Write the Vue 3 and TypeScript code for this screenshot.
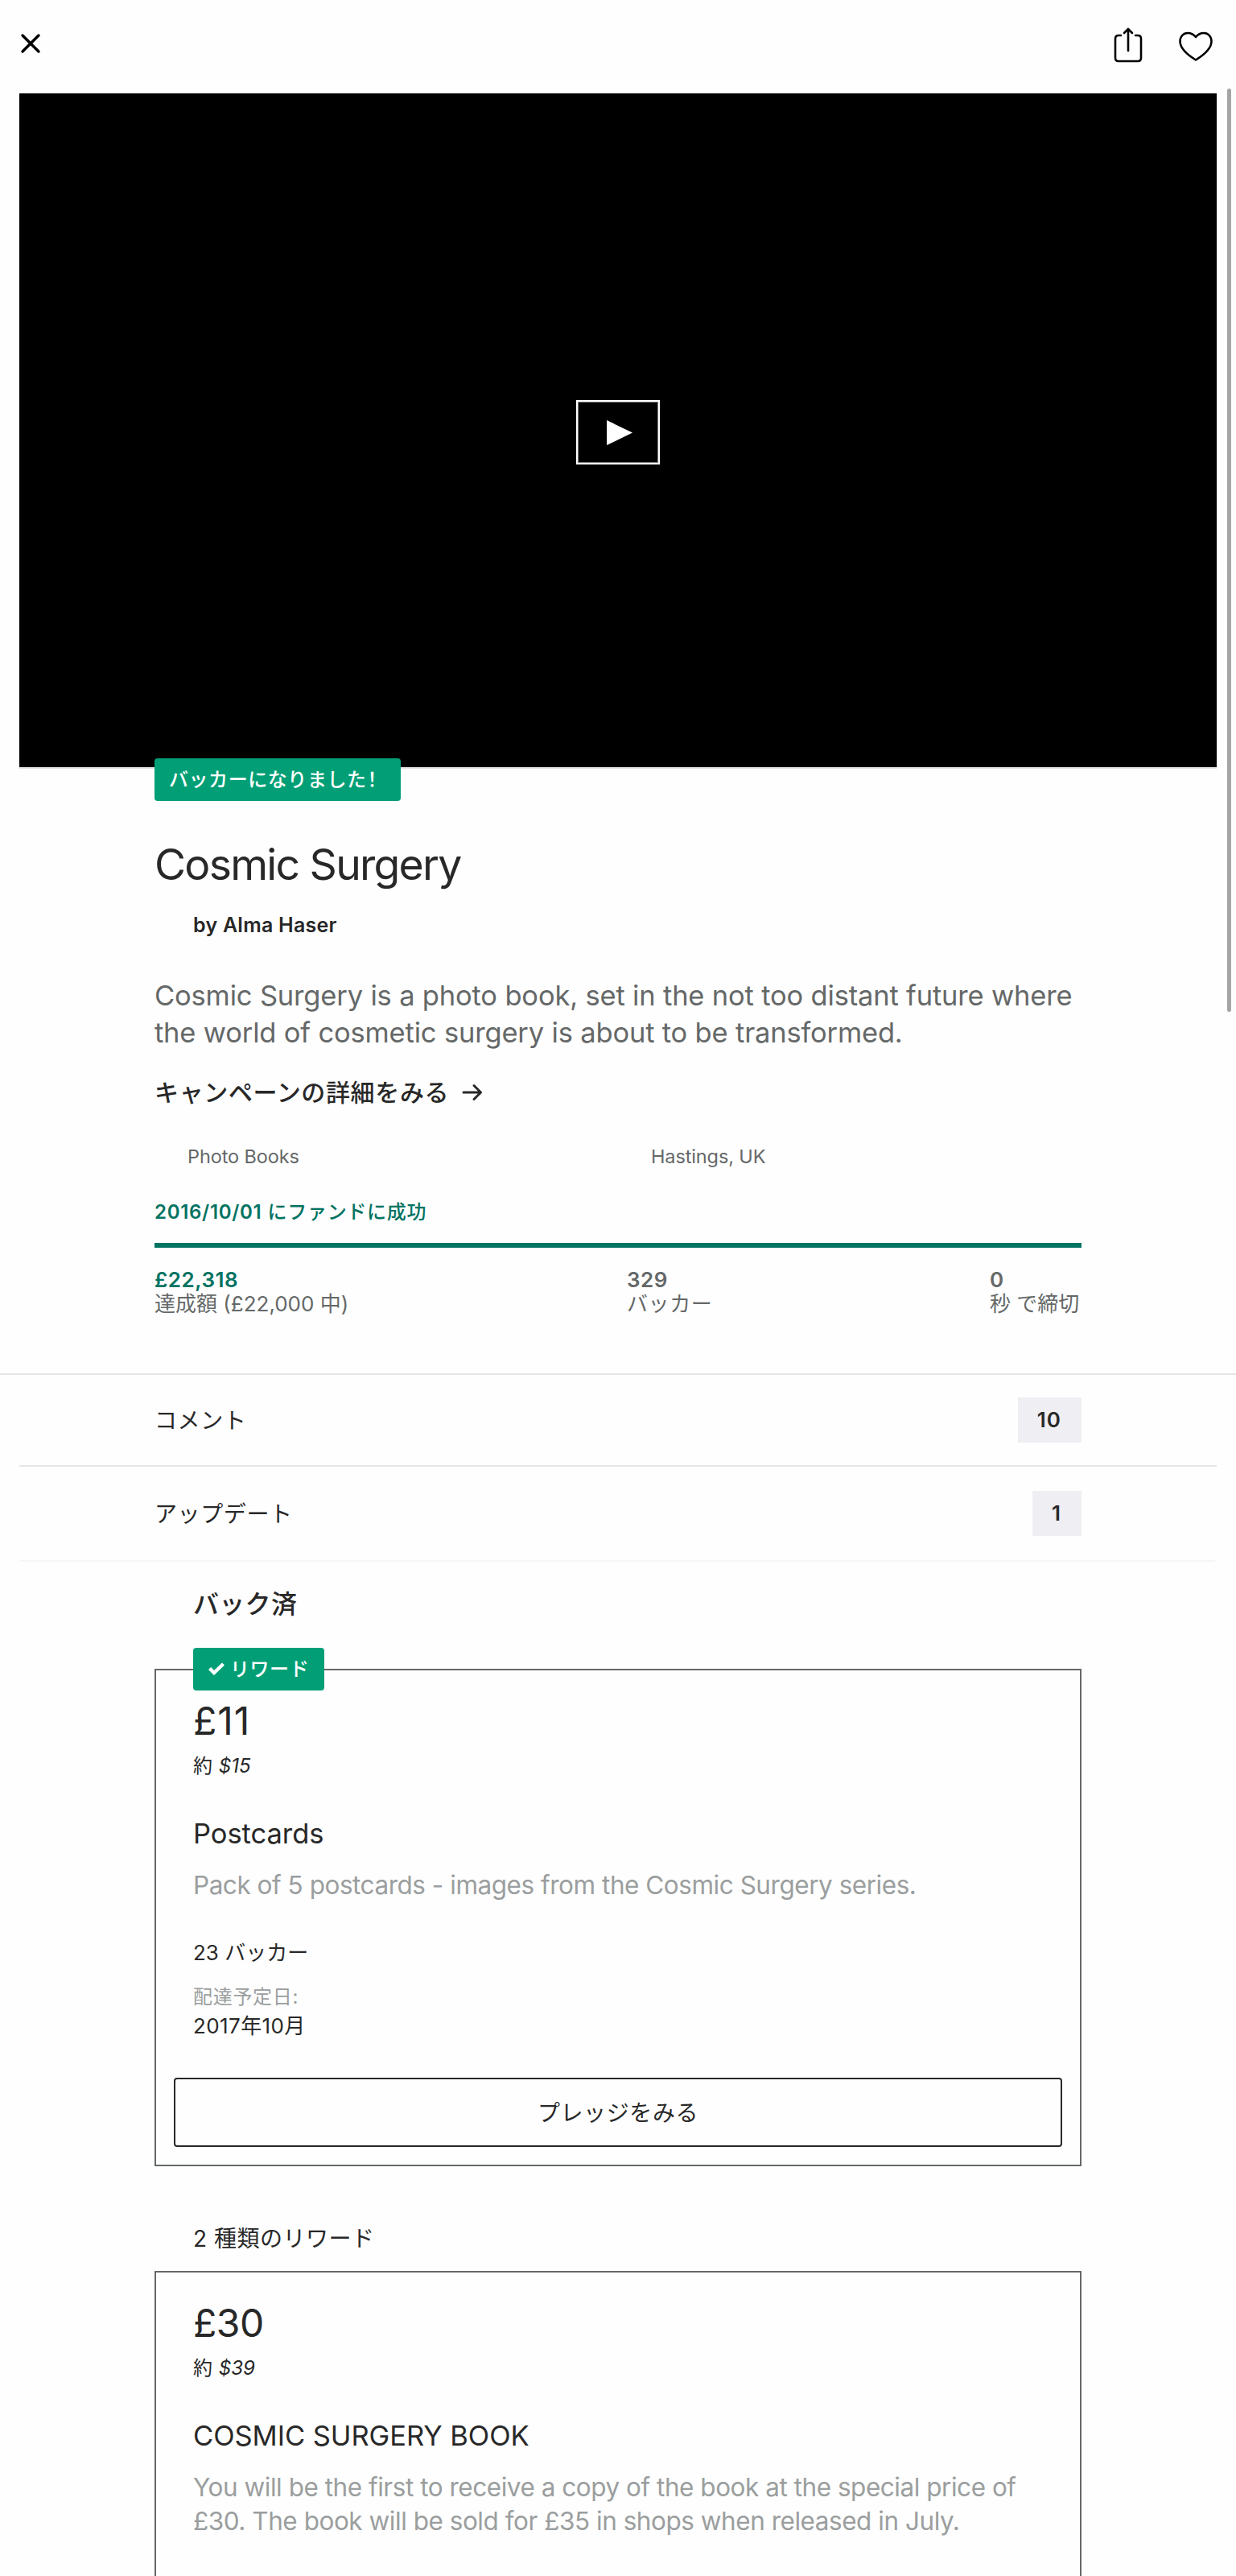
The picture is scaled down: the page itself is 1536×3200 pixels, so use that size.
<script setup lang="ts">
interface Reward {
  price: string
  converted: string
  title: string
  description: string[]
  backers?: string
  delivery?: string
  pledged?: boolean
}

const badge = { text: 'バッカーになりました', mark: '！' }

const blurb = [
  'Cosmic Surgery is a photo book, set in the not too distant future where',
  'the world of cosmetic surgery is about to be transformed.',
]

const links = [
  { label: 'コメント', count: 10 },
  { label: 'アップデート', count: 1 },
]

const pledged: Reward = {
  price: '£11',
  converted: '$15',
  title: 'Postcards',
  description: ['Pack of 5 postcards - images from the Cosmic Surgery series.'],
  backers: '23 バッカー',
  delivery: '2017年10月',
  pledged: true,
}

const available: Reward = {
  price: '£30',
  converted: '$39',
  title: 'COSMIC SURGERY BOOK',
  description: [
    'You will be the first to receive a copy of the book at the special price of',
    '£30. The book will be sold for £35 in shops when released in July.',
  ],
}

const sections = [
  { heading: 'バック済', strong: true, reward: pledged },
  { heading: '2 種類のリワード', strong: false, reward: available },
]
</script>

<template>
  <div class="page">
    <header class="toolbar">
      <svg class="close" width="26" height="26" viewBox="0 0 26 26" aria-label="Close">
        <path d="M3 3 L23 23 M23 3 L3 23" />
      </svg>
      <div class="actions">
        <svg width="36" height="44" viewBox="0 0 36 44" aria-label="Share">
          <path d="M9 10 H6 Q2 10 2 14 V38 Q2 42 6 42 H30 Q34 42 34 38 V14 Q34 10 30 10 H27" />
          <path d="M18 29 V3 M13 7 L18 2 L23 7" />
        </svg>
        <svg width="42" height="38" viewBox="0 0 42 38" aria-label="Save">
          <path d="M21 7 C18 3.5 14.500 2 11 2 C5.500 2 1.500 6.500 1.500 12.500 C1.500 21 9 28 21 35.500 C33 28 40.500 21 40.500 12.500 C40.500 6.500 36.500 2 31 2 C27.500 2 24 3.500 21 7 Z" />
        </svg>
      </div>
    </header>

    <section class="video">
      <div class="play">
        <svg width="32" height="31" viewBox="0 0 32 31"><path d="M0 0 L32 15.500 L0 31 Z" /></svg>
      </div>
      <div class="scrollbar"></div>
      <div class="tag backer">{{ badge.text }}<span class="mark">{{ badge.mark }}</span></div>
    </section>

    <section class="summary">
      <h1>Cosmic Surgery</h1>
      <p class="author">by Alma Haser</p>
      <p class="blurb"><span v-for="line in blurb" :key="line">{{ line }}</span></p>
      <p class="campaign">
        <span>キャンペーンの詳細をみる</span>
        <svg width="26" height="22" viewBox="0 0 26 22">
          <path d="M2 11 H23 M15 2.500 L23.500 11 L15 19.500" />
        </svg>
      </p>
      <div class="meta">
        <span>Photo Books</span>
        <span>Hastings, UK</span>
      </div>
      <p class="funded"><span class="date">2016/10/01</span> にファンドに成功</p>
      <div class="progress"></div>
      <div class="stats">
        <div class="stat raised"><b>£22,318</b><span>達成額 (£22,000 中)</span></div>
        <div class="stat backers"><b>329</b><span class="kana">バッカー</span></div>
        <div class="stat"><b>0</b><span>秒 で締切</span></div>
      </div>
    </section>

    <nav class="links">
      <div v-for="link in links" :key="link.label" class="link">
        <span>{{ link.label }}</span>
        <b>{{ link.count }}</b>
      </div>
    </nav>

    <section v-for="s in sections" :key="s.heading" class="rewards">
      <h2 :class="{ strong: s.strong }">{{ s.heading }}</h2>
      <article class="card" :class="{ pledged: s.reward.pledged }">
        <div v-if="s.reward.pledged" class="tag chosen">
          <svg width="20" height="16" viewBox="0 0 20 16"><path d="M1.500 7.500 L7 13 L18.500 2" /></svg>
          <span>リワード</span>
        </div>
        <p class="price">{{ s.reward.price }}</p>
        <p class="approx">約 <em>{{ s.reward.converted }}</em></p>
        <h3>{{ s.reward.title }}</h3>
        <p class="description">
          <span v-for="line in s.reward.description" :key="line">{{ line }}</span>
        </p>
        <template v-if="s.reward.backers">
          <p class="count">{{ s.reward.backers }}</p>
          <p class="label">配達予定日:</p>
          <p class="delivery">{{ s.reward.delivery }}</p>
          <button>プレッジをみる</button>
        </template>
      </article>
    </section>
  </div>
</template>

<style>
body {
  background: #fefefe;
}
</style>

<style scoped>
.page {
  width: 1536px;
  height: 3200px;
  overflow: hidden;
  box-sizing: border-box;
  background: #fefefe;
  color: #282828;
  font-family: Inter, "Noto Sans CJK JP", sans-serif;
}

p,
h1,
h2,
h3 {
  margin: 0;
  font-weight: 400;
  white-space: nowrap;
}

svg {
  display: block;
  fill: none;
  stroke: #000;
  stroke-width: 2.6;
  stroke-linecap: round;
  stroke-linejoin: round;
}

/* toolbar */
.toolbar {
  display: flex;
  justify-content: space-between;
  align-items: flex-start;
  height: 116px;
  padding: 0 29px 0 25px;
  box-sizing: border-box;
}

.close {
  margin-top: 41px;
  stroke-width: 3.4;
}

.actions {
  display: flex;
  align-items: flex-start;
  gap: 45px;
  padding-top: 34px;
}

.actions svg:last-child {
  margin-top: 5px;
}

/* video */
.video {
  position: relative;
  display: flex;
  align-items: center;
  justify-content: center;
  height: 837px;
  margin: 0 24px;
  background: #000;
  border-bottom: 2px solid #e4e4e4;
}

.play {
  display: flex;
  align-items: center;
  justify-content: center;
  width: 104px;
  height: 80px;
  margin-top: 5px;
  box-sizing: border-box;
  border: 2px solid #fff;
  box-shadow: inset 0 0 0 1px #808080;
}

.play svg {
  margin-left: 3px;
  fill: #fff;
  stroke: none;
}

.scrollbar {
  position: absolute;
  left: 1501px;
  top: -6px;
  width: 5px;
  height: 1147px;
  border-radius: 3px;
  background: #a5a5a5;
}

.tag {
  position: absolute;
  height: 53px;
  box-sizing: border-box;
  border-radius: 4px;
  background: #029f76;
  color: #fff;
  font-size: 24px;
  font-weight: 500;
  line-height: 53px;
  letter-spacing: 0.56px;
  white-space: nowrap;
}

.backer {
  left: 168px;
  top: 826px;
  width: 306px;
  padding-left: 18px;
}

.mark {
  margin-left: -5px;
}

/* summary */
.summary {
  display: flex;
  flex-direction: column;
  height: 751px;
  padding: 87px 192px 0;
  box-sizing: border-box;
}

h1 {
  font-size: 53.5px;
  line-height: 64px;
  letter-spacing: -1.75px;
}

.author {
  margin-top: 28px;
  padding-left: 48px;
  font-size: 25px;
  font-weight: 600;
  line-height: 30px;
  letter-spacing: 0.25px;
}

.blurb {
  margin-top: 50px;
  color: #656868;
  font-size: 34.5px;
  line-height: 46px;
  letter-spacing: -0.17px;
}

.blurb span,
.description span {
  display: block;
}

.campaign {
  display: flex;
  align-items: center;
  gap: 16px;
  margin-top: 31px;
  font-size: 30px;
  font-weight: 500;
  line-height: 40px;
  letter-spacing: 0.64px;
}

.campaign svg {
  stroke: #282828;
  stroke-width: 3;
}

.meta {
  display: grid;
  grid-template-columns: 1fr 1fr;
  margin-top: 46px;
  color: #656868;
  font-size: 23.5px;
  line-height: 28px;
  letter-spacing: -0.12px;
}

.meta span {
  padding-left: 41px;
}

.funded {
  margin-top: 40px;
  color: #037362;
  font-size: 24px;
  font-weight: 500;
  line-height: 30px;
  letter-spacing: 0.7px;
}

.date {
  font-weight: 600;
}

.progress {
  height: 6px;
  margin-top: 23px;
  background: #037362;
}

.stats {
  display: flex;
  justify-content: space-between;
  margin-top: 25px;
}

.stat {
  display: flex;
  flex-direction: column;
  color: #656868;
  font-size: 26px;
  line-height: 30px;
  white-space: nowrap;
}

.stat b {
  font-weight: 600;
  letter-spacing: 0.5px;
}

.stat:last-child {
  width: 114px;
}

.kana {
  letter-spacing: 0.6px;
}

.raised {
  width: 346px;
}

.backers {
  width: 212px;
  margin-right: auto;
  padding-left: 241px;
}

.raised b {
  color: #037362;
}

/* links */
.links {
  border-top: 2px solid #e6e6e6;
}

.link {
  display: flex;
  align-items: center;
  justify-content: space-between;
  height: 114px;
  margin: 0 24px;
  padding: 0 168px;
  box-sizing: border-box;
  border-bottom: 2px solid #e6e6e6;
  font-size: 28px;
  letter-spacing: 0.6px;
}

.link span {
  margin-top: -2px;
}

.link:last-child {
  height: 118px;
  margin-right: 26px;
  padding-right: 166px;
  border-color: #f5f5f5;
}

.link b {
  height: 56px;
  padding: 0 25px 0 24px;
  background: #efeef3;
  font-size: 26px;
  font-weight: 600;
  line-height: 56px;
  letter-spacing: 1px;
}

/* rewards */
.rewards {
  padding: 0 192px;
}

h2 {
  margin: 72px 0 22px;
  padding-left: 48px;
  font-size: 28px;
  line-height: 36px;
  letter-spacing: 0.5px;
}

h2.strong {
  margin: 33px 0 60px;
  font-size: 32px;
  font-weight: 500;
  line-height: 40px;
  letter-spacing: 0.3px;
}

.card {
  position: relative;
  min-height: 618px;
  padding: 34px 46px 22px;
  box-sizing: border-box;
  border: 2px solid #656868;
}

.chosen {
  left: 46px;
  top: -28px;
  display: flex;
  align-items: center;
  gap: 7px;
  width: 163px;
  padding-left: 19px;
}

.chosen svg {
  margin-top: -2px;
  stroke: #fff;
  stroke-width: 4.4;
  stroke-linecap: butt;
  stroke-linejoin: miter;
}

.price {
  font-size: 48px;
  line-height: 57px;
  letter-spacing: -0.5px;
}

.pledged .price {
  letter-spacing: 1px;
}

.approx {
  margin-top: 14px;
  font-size: 24px;
  line-height: 28px;
  word-spacing: 1px;
}

h3 {
  margin-top: 49px;
  font-size: 34.5px;
  line-height: 42px;
  letter-spacing: -0.05px;
}

.description {
  margin-top: 22px;
  color: #9b9e9e;
  font-size: 31.5px;
  line-height: 42px;
  letter-spacing: -0.47px;
}

.count {
  margin-top: 47px;
  font-size: 26px;
  line-height: 32px;
}

.label {
  margin-top: 24px;
  color: #9b9e9e;
  font-size: 24px;
  line-height: 30px;
  letter-spacing: 0.7px;
}

.delivery {
  margin-top: 3px;
  font-size: 26px;
  line-height: 36px;
  letter-spacing: 0.4px;
}

button {
  display: block;
  width: 1104px;
  height: 86px;
  margin: 46px 0 0 -24px;
  padding: 0 0 3px;
  border: 2px solid #282828;
  border-radius: 4px;
  background: transparent;
  color: #282828;
  font: inherit;
  font-size: 28px;
  letter-spacing: 0.6px;
}
</style>
